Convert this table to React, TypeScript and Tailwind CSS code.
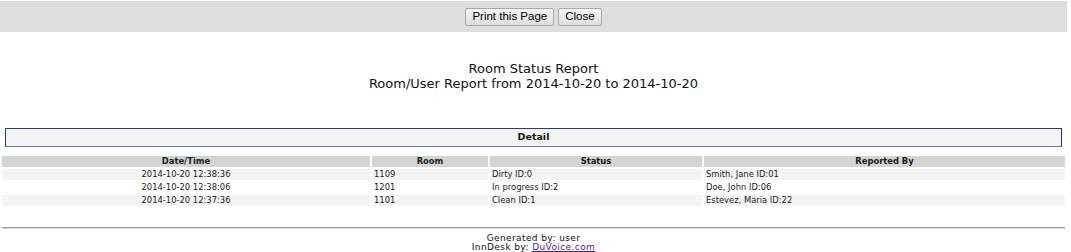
const rows = [
  { time: "2014-10-20 12:38:36", room: "1109", status: "Dirty ID:0", by: "Smith, Jane ID:01" },
  { time: "2014-10-20 12:38:06", room: "1201", status: "In progress ID:2", by: "Doe, John ID:06" },
  { time: "2014-10-20 12:37:36", room: "1101", status: "Clean ID:1", by: "Estevez, Maria ID:22" },
];

const btn =
  "h-[18px] px-[6px] border border-[#a9a9a9] rounded-[2px] bg-gradient-to-b from-[#f8f8f8] to-[#dddddd] text-[11.5px] leading-none text-black font-['Liberation_Sans',Arial,sans-serif]";

export default function App() {
  return (
    <div className="w-[1067px] bg-white text-[#111] font-['DejaVu_Sans',Verdana,sans-serif]">
      <div className="mt-px h-[31px] bg-[#dedede] flex items-center justify-center gap-[4px]">
        <button className={btn}>Print this Page</button>
        <button className={btn}>Close</button>
      </div>

      <div className="pt-[29px] text-center text-[13px] leading-[15px] text-[#111]">
        <div>Room Status Report</div>
        <div>Room/User Report from 2014-10-20 to 2014-10-20</div>
      </div>

      <div className="mt-[37px] mx-[5px] h-[19px] border border-[#1d3f7a] border-b-[#5b7fb8] bg-[#f4f4f4] flex items-center justify-center text-[9.5px] font-bold">
        Detail
      </div>

      <table className="mt-[7px] w-full border-separate border-spacing-x-[2px] border-spacing-y-[2px] text-[8.4px] leading-[11px] text-[#1a1a1a]">
        <thead>
          <tr className="bg-[#d4d4d4]">
            <th className="w-[368px] h-[11px] p-0 font-bold">Date/Time</th>
            <th className="w-[116px] p-0 font-bold">Room</th>
            <th className="w-[212px] p-0 font-bold">Status</th>
            <th className="p-0 font-bold">Reported By</th>
          </tr>
        </thead>
        <tbody>
          {rows.map((r, i) => (
            <tr key={i} className={i % 2 === 0 ? "bg-[#f4f4f4]" : "bg-white"}>
              <td className="h-[11px] p-0 text-center">{r.time}</td>
              <td className="p-0 pl-[2px]">{r.room}</td>
              <td className="p-0 pl-[2px]">{r.status}</td>
              <td className="p-0 pl-[2px]">{r.by}</td>
            </tr>
          ))}
        </tbody>
      </table>

      <div className="mt-[19px] mx-[2px] border-t border-b border-t-[#9a9a9a] border-b-[#d8d8d8]" />
      <div className="pt-[5px] text-center text-[9px] leading-[9px] tracking-[0.4px] text-[#111]">
        <div>Generated by: user</div>
        <div>
          InnDesk by: <a href="#" className="underline text-[#551a8b]">DuVoice.com</a>
        </div>
      </div>
    </div>
  );
}
